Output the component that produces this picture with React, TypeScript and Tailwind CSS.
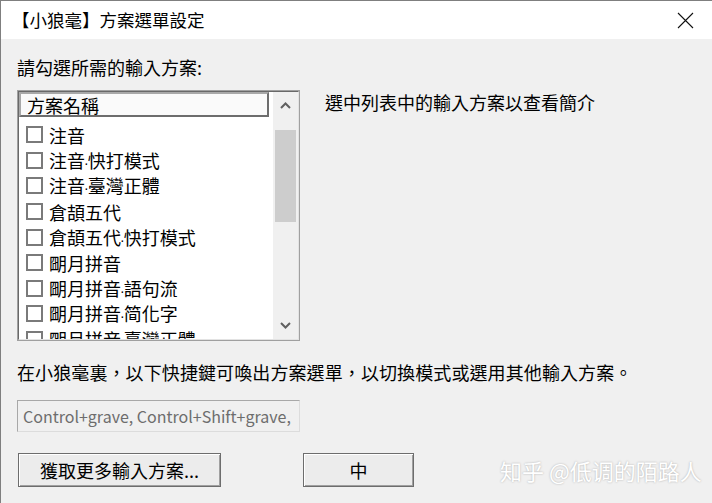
const schemas = [
  ['注音'],
  ['注音', '快打模式'],
  ['注音', '臺灣正體'],
  ['倉頡五代'],
  ['倉頡五代', '快打模式'],
  ['朙月拼音'],
  ['朙月拼音', '語句流'],
  ['朙月拼音', '简化字'],
  ['朙月拼音', '臺灣正體'],
];

function Chevron({ down }: { down?: boolean }) {
  return (
    <svg width="11" height="7" viewBox="0 0 11 7" className={down ? 'rotate-180' : ''}>
      <path d="M1 6 L5.5 1.5 L10 6" fill="none" stroke="#606060" strokeWidth="2" />
    </svg>
  );
}

function SchemaList() {
  return (
    <div className="w-[283px] h-[251px] border border-[#a0a0a0] bg-white shrink-0">
      <div className="flex h-full border-l border-t border-[#696969] border-r-[#e3e3e3] border-b-[#e3e3e3] border-r border-b">
        <div className="flex-1 flex flex-col overflow-hidden">
          <div className="w-[250px] h-[25px] shrink-0 border-2 border-[#a8a8a8] border-r-[#6d6d6d] border-b-[#6d6d6d] bg-[#fafafa] flex items-center pl-[6px] leading-none">
            方案名稱
          </div>
          <div className="mt-[5px] flex flex-col">
            {schemas.map(([base, variant]) => (
              <div key={base + (variant ?? '')} className="h-[25.6px] shrink-0 flex items-center pl-[7px] gap-[6px] leading-none whitespace-nowrap">
                <span className="w-[17px] h-[17px] border-2 border-[#7a7a7a] bg-white shrink-0" />
                <span>
                  {base}
                  {variant && (
                    <>
                      <span className="font-['Liberation_Sans',sans-serif] text-[14px] mx-[-1px]">·</span>
                      {variant}
                    </>
                  )}
                </span>
              </div>
            ))}
          </div>
        </div>
        <div className="w-[25px] bg-[#f0f0f0] flex flex-col">
          <div className="h-[26px] flex items-center justify-center">
            <Chevron />
          </div>
          <div className="h-[92px] mt-[12px] mx-[2px] bg-[#cdcdcd]" />
          <div className="flex-1" />
          <div className="h-[28px] flex items-center justify-center">
            <Chevron down />
          </div>
        </div>
      </div>
    </div>
  );
}

export default function App() {
  return (
    <div className="w-[712px] h-[503px] overflow-hidden bg-[#f0f0f0] border-l border-t border-[#7f7f7f] flex flex-col font-['Noto_Sans_CJK_TC','Noto_Sans_CJK_SC',sans-serif] text-[18px] text-black">
      <div className="h-[38px] shrink-0 bg-white flex items-center justify-between pl-[11px] pr-[18px]">
        <span className="text-[17.5px]">【小狼毫】方案選單設定</span>
        <svg width="17" height="17" viewBox="0 0 17 17">
          <path d="M1 1 L16 16 M16 1 L1 16" stroke="#111" strokeWidth="1.1" />
        </svg>
      </div>

      <div className="flex flex-col pl-4 pt-[16px]">
        <div className="leading-[24px]">請勾選所需的輸入方案:</div>

        <div className="mt-[11px] flex items-start">
          <SchemaList />
          <div className="ml-[25px] leading-[24px]">選中列表中的輸入方案以查看簡介</div>
        </div>

        <div className="mt-[19px] leading-[24px] tracking-[0.1px]">
          在小狼毫裏，以下快捷鍵可喚出方案選單，以切換模式或選用其他輸入方案。
        </div>

        <div className="mt-[16px] w-[283px] h-[32px] border border-[#a8a8a8] border-r-[#dcdcdc] border-b-[#dcdcdc] bg-[#f0f0f0] flex items-center pl-[5px] text-[#6d6d6d] text-[16px] whitespace-nowrap overflow-hidden">
          Control+grave, Control+Shift+grave,
        </div>

        <div className="mt-[21px] flex items-center">
          <button className="ml-[1px] w-[203px] h-[34px] border border-[#6d6d6d] bg-[#ececec] shadow-[inset_1px_1px_#fff,inset_-1px_-1px_#a0a0a0] flex items-center justify-center">
            獲取更多輸入方案...
          </button>
          <button className="ml-[82px] w-[111px] h-[34px] border border-[#6d6d6d] bg-[#ececec] shadow-[inset_1px_1px_#fff,inset_-1px_-1px_#a0a0a0] flex items-center justify-center">
            中
          </button>
          <div className="ml-[86px] text-[22px] text-white font-['Noto_Sans_CJK_SC',sans-serif] [text-shadow:0_0_2px_#a8a8a8] whitespace-nowrap">
            知乎 @低调的陌路人
          </div>
        </div>
      </div>
    </div>
  );
}
